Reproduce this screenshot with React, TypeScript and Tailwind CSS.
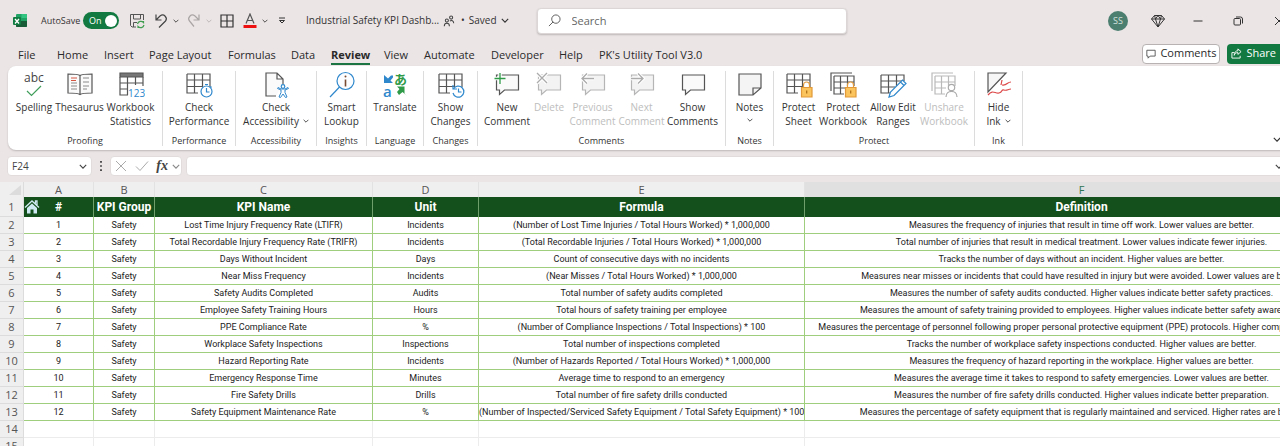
import React from "react";

const ui = "font-['Open_Sans','Noto_Sans_CJK_JP',sans-serif]";

function Chevron({ className = "" }: { className?: string }) {
  return (
    <svg viewBox="0 0 10 6" className={className} fill="none" stroke="currentColor" strokeWidth="1.4" aria-hidden="true">
      <path d="M1 1l4 4 4-4" />
    </svg>
  );
}

function Icon({ children, className = "" }: { children: React.ReactNode; className?: string }) {
  return (
    <svg viewBox="0 0 28 28" className={`mb-px h-7 w-7 ${className}`} fill="none" stroke="#555" strokeWidth="1.2" aria-hidden="true">
      {children}
    </svg>
  );
}

/* ---------- ribbon icons ---------- */

const SpellingIcon = () => (
  <span className="mb-px flex h-7 flex-col items-center">
    <span className="text-[12px] leading-[14px] text-[#444]">abc</span>
    <svg viewBox="0 0 16 12" className="h-3 w-4" fill="none" stroke="#3f9e5a" strokeWidth="1.2" aria-hidden="true">
      <path d="M1 6l4.500 4.500L15 1" />
    </svg>
  </span>
);

const ThesaurusIcon = () => (
  <Icon>
    <path d="M14 4.500C12 3 8 3 2 3v19c6 0 10 0 12 1.500C16 22 20 22 26 22V3c-6 0-10 0-12 1.500zM14 4.500v19" fill="#fafafa" />
    <path d="M5 12h6M5 15h6M5 18h6M17 7h6M17 11h6M17 15h6M17 18h4" stroke="#8a8a8a" />
    <path d="M5 7h6M5 9.500h5" stroke="#d4553f" />
  </Icon>
);

const StatisticsIcon = () => (
  <Icon>
    <path d="M3 2h23v4H3z" fill="#777" stroke="#555" />
    <path d="M3 6v18h8M26 6v9M3 12h23M3 18h8M10.500 6v18M18.500 6v8" />
    <text x="11" y="25.500" fontSize="10" fill="#2f88cc" stroke="none">123</text>
  </Icon>
);

const gridPath = "M2 3h23v13M2 3v19h11M2 9h23M2 15.500h16M9.500 3v19M17.500 3v13";

const PerformanceIcon = () => (
  <Icon>
    <path d={gridPath} />
    <circle cx="21.500" cy="20.500" r="5.500" fill="#fff" stroke="#2f88cc" />
    <path d="M21.500 17v4h3M20 13.500h3M25.500 15.500l1 1" stroke="#2f88cc" />
  </Icon>
);

const AccessibilityIcon = () => (
  <Icon>
    <path d="M14 25H4V2h11l6 6v5M15 2v6h6" fill="#fafafa" />
    <circle cx="21" cy="15.500" r="1.800" fill="#fff" stroke="#2f88cc" />
    <path d="M15.500 17.500l3.500 1.500v2.500L17 26l1.500 .500L21 23l2.500 3.500L25 26l-2-4.500V19l3.500-1.500-.500-1L23 18h-4l-3-1.500z" stroke="#2f88cc" fill="#fff" strokeWidth="1" />
  </Icon>
);

const LookupIcon = () => (
  <Icon>
    <circle cx="17.500" cy="10" r="8.500" stroke="#2f88cc" fill="#fbfdff" />
    <path d="M11.500 16L2 26" stroke="#2f88cc" />
    <path d="M17.500 8.500v7" stroke="#7a4a30" strokeWidth="1.600" />
    <circle cx="17.500" cy="5.500" r="1" fill="#7a4a30" stroke="none" />
  </Icon>
);

const TranslateIcon = () => (
  <Icon>
    <path d="M3 4v8h9L9.500 9.500 12 6.500V4.500H10L7 7.500z" fill="#2f88cc" stroke="none" />
    <path d="M26 25l-2.500-2.500V15.500H16l2.500 2.500-2.500 3 2 3 3.500-3z" fill="#2f9a48" stroke="none" />
    <text x="2" y="25.500" fontSize="15" fontWeight="600" fill="#2f88cc" stroke="none">a</text>
    <text x="13" y="13" fontSize="13" fontWeight="600" fill="#2f9a48" stroke="none">あ</text>
  </Icon>
);

const ChangesIcon = () => (
  <Icon>
    <path d={gridPath} />
    <path d="M16.500 18a5.500 5.500 0 1 1-.500 4" fill="#fff" stroke="#2f88cc" />
    <path d="M16 14v4h4" stroke="#2f88cc" />
    <path d="M21.500 17.500v3.500h3" stroke="#2f88cc" />
  </Icon>
);

function Bubble({ muted, mark }: { muted?: boolean; mark?: string }) {
  return (
    <Icon>
      <path d="M3.500 4h22v15h-14l-5 4.500V19h-3z" stroke={muted ? "#b5b5b5" : "#555"} fill={muted ? "#f3f3f3" : "#fafafa"} />
      {mark && <path d={mark} stroke="#fff" strokeWidth="3.500" />}
      {mark && <path d={mark} stroke={muted ? "#ababab" : "#2f9a48"} strokeWidth="1.300" />}
    </Icon>
  );
}

const NotesIcon = () => (
  <Icon>
    <path d="M3 3h22v14l-8 7H3zM17 24v-7h8" fill="#f4f4f4" />
  </Icon>
);

const Lock = () => (
  <>
    <path d="M18.500 17v-3a3 3 0 0 1 6 0v3" stroke="#e2993a" fill="#fff" />
    <path d="M16.500 16.500h10.500V26H16.500z" fill="#fbc45c" stroke="#e2993a" />
    <path d="M21.700 19.500v3" stroke="#a86a14" />
  </>
);

const ProtectSheetIcon = () => (
  <Icon>
    <path d={gridPath} />
    <Lock />
  </Icon>
);

const bookPath = "M2 20V2h21M5 5h20v10M5 5v18h10M5 11h20M5 17h11M11.500 5v18M18.500 5v10";

const ProtectWorkbookIcon = () => (
  <Icon>
    <path d={bookPath} />
    <Lock />
  </Icon>
);

const AllowEditIcon = () => (
  <Icon>
    <path d="M2 4h23v6M2 4v18h9M2 10h23M2 16h14M9.500 4v18M17.500 4v12" />
    <path d="M10 26l1.500-5L23.500 9l3.500 3.500-12 12zM21.500 11l3.500 3.500" fill="#fff" stroke="#2f88cc" />
  </Icon>
);

const UnshareIcon = () => (
  <Icon>
    <path d={bookPath} stroke="#b9b9b9" />
    <circle cx="21.500" cy="16.500" r="3.200" fill="#fff" stroke="#aaa" />
    <path d="M16 26c0-7.500 11-7.500 11 0" fill="#fff" stroke="#aaa" />
  </Icon>
);

const InkIcon = () => (
  <Icon>
    <path d="M3 2h18L3 21z" fill="#f6f6f6" />
    <path d="M3 24c5-6 7-1 11-2s2-4 5-3 4-1 7-1M26 11c-4 0-4 4-9 3M17 9l-1 5" stroke="#dd4747" />
  </Icon>
);

/* ---------- ribbon ---------- */

type Tool = { icon: React.ReactNode; lines: string[]; width: string; muted?: boolean; menu?: "inline" | "below" };
type Group = { label: string; width: string; tools: Tool[] };

const groups: Group[] = [
  {
    label: "Proofing",
    width: "w-[155px]",
    tools: [
      { icon: <SpellingIcon />, lines: ["Spelling"], width: "w-[41px]" },
      { icon: <ThesaurusIcon />, lines: ["Thesaurus"], width: "w-[50px]" },
      { icon: <StatisticsIcon />, lines: ["Workbook", "Statistics"], width: "w-[52px]" },
    ],
  },
  { label: "Performance", width: "w-[73px]", tools: [{ icon: <PerformanceIcon />, lines: ["Check", "Performance"], width: "w-[70px]" }] },
  {
    label: "Accessibility",
    width: "w-[81px]",
    tools: [{ icon: <AccessibilityIcon />, lines: ["Check", "Accessibility"], width: "w-[78px]", menu: "inline" }],
  },
  { label: "Insights", width: "w-[50px]", tools: [{ icon: <LookupIcon />, lines: ["Smart", "Lookup"], width: "w-[46px]" }] },
  { label: "Language", width: "w-[57px]", tools: [{ icon: <TranslateIcon />, lines: ["Translate"], width: "w-[50px]" }] },
  { label: "Changes", width: "w-[54px]", tools: [{ icon: <ChangesIcon />, lines: ["Show", "Changes"], width: "w-[50px]" }] },
  {
    label: "Comments",
    width: "w-[248px]",
    tools: [
      { icon: <Bubble mark="M7 2v11M1.500 7.500h11" />, lines: ["New", "Comment"], width: "w-[46px]" },
      { icon: <Bubble muted mark="M2 2l10 10M12 2L2 12" />, lines: ["Delete"], width: "w-[38px]", muted: true },
      { icon: <Bubble muted mark="M15 7.500H3M8 2.500l-5 5 5 5" />, lines: ["Previous", "Comment"], width: "w-[49px]", muted: true },
      { icon: <Bubble muted mark="M3 7.500h12M10 2.500l5 5-5 5" />, lines: ["Next", "Comment"], width: "w-[49px]", muted: true },
      { icon: <Bubble />, lines: ["Show", "Comments"], width: "w-[53px]" },
    ],
  },
  { label: "Notes", width: "w-[48px]", tools: [{ icon: <NotesIcon />, lines: ["Notes"], width: "w-[40px]", menu: "below" }] },
  {
    label: "Protect",
    width: "w-[201px]",
    tools: [
      { icon: <ProtectSheetIcon />, lines: ["Protect", "Sheet"], width: "w-[40px]" },
      { icon: <ProtectWorkbookIcon />, lines: ["Protect", "Workbook"], width: "w-[49px]" },
      { icon: <AllowEditIcon />, lines: ["Allow Edit", "Ranges"], width: "w-[51px]" },
      { icon: <UnshareIcon />, lines: ["Unshare", "Workbook"], width: "w-[51px]", muted: true },
    ],
  },
  { label: "Ink", width: "w-[48px]", tools: [{ icon: <InkIcon />, lines: ["Hide", "Ink"], width: "w-[40px]", menu: "inline" }] },
];

function ToolButton({ tool }: { tool: Tool }) {
  return (
    <button
      type="button"
      disabled={tool.muted}
      className={`flex shrink-0 flex-col items-center whitespace-nowrap text-[10px] leading-[14px] ${tool.width} ${tool.muted ? "text-[#bdbdbd]" : "text-[#333]"}`}
    >
      {tool.icon}
      {tool.lines.map((line, i) => (
        <span key={line} className="flex items-center gap-1">
          {line}
          {tool.menu === "inline" && i === tool.lines.length - 1 && <Chevron className="h-1 w-[6px]" />}
        </span>
      ))}
      {tool.menu === "below" && <Chevron className="mt-1 h-1 w-[6px]" />}
    </button>
  );
}

function Ribbon() {
  return (
    <section aria-label="Review" className="ml-2 -mr-2 flex items-stretch rounded-lg bg-white pt-[5px] pb-1 shadow-[0_1px_2px_rgba(0,0,0,0.2)]">
      {groups.map((g) => (
        <div key={g.label} className={`flex h-[75px] shrink-0 flex-col items-center justify-between border-r border-[#dcdcdc] ${g.width}`}>
          <div className="flex">
            {g.tools.map((t, i) => (
              <ToolButton key={i} tool={t} />
            ))}
          </div>
          <span className="text-[9px] leading-[10px] text-[#333]">{g.label}</span>
        </div>
      ))}
      <button type="button" aria-label="Collapse ribbon" className="mr-[7px] ml-auto self-end pb-1 text-[#333]">
        <Chevron className="h-[5px] w-2" />
      </button>
    </section>
  );
}

/* ---------- title bar and tabs ---------- */

function TitleBar() {
  return (
    <header className="flex h-[41px] items-center text-[10px] text-[#333]">
      <svg viewBox="0 0 16 16" className="ml-3 h-4 w-4 shrink-0" aria-hidden="true">
        <rect x="4" y="1" width="11" height="13" rx="1" fill="#21a366" />
        <path d="M9.500 1H14a1 1 0 0 1 1 1v3H9.500z" fill="#33c481" />
        <path d="M4 8h11v5a1 1 0 0 1-1 1H5a1 1 0 0 1-1-1z" fill="#185c37" />
        <rect x="1" y="4" width="8" height="8" rx="1" fill="#107c41" />
        <path d="M3 6l4 4.500M7 6l-4 4.500" stroke="#fff" strokeWidth="1.300" />
      </svg>
      <label className="ml-[13px] flex items-center">
        <span className="w-[42px] text-[9px]">AutoSave</span>
        <span className="flex h-[17px] w-9 items-center justify-between rounded-full bg-[#127a40] pr-[2px] pl-[6px] text-[9px] text-white">
          <input type="checkbox" role="switch" defaultChecked className="sr-only" />
          On
          <span className="h-3 w-3 rounded-full bg-white" />
        </span>
      </label>
      <button type="button" aria-label="Save" className="ml-[10px]">
        <svg viewBox="0 0 16 16" className="h-4 w-4" fill="none" stroke="#555" aria-hidden="true">
          <path d="M7 14H3l-1.500-1.500V1.500h13V7M4.500 1.500V6h7V1.500M4.500 14V9.500H8" />
          <path d="M8.500 11a3.500 3.500 0 0 1 6-1.500V8M15 12a3.500 3.500 0 0 1-6 1.500V15" stroke="#3f9e4f" strokeWidth="1.200" />
        </svg>
      </button>
      <button type="button" aria-label="Undo" className="ml-2 flex items-center gap-1">
        <svg viewBox="0 0 16 16" className="h-4 w-4" fill="none" stroke="#444" strokeWidth="1.200" aria-hidden="true">
          <path d="M3 1.500V7h5.500M3 7l4-4c4-3 8 2 5.500 5L6 14.500" />
        </svg>
        <Chevron className="h-1 w-[6px]" />
      </button>
      <button type="button" aria-label="Redo" disabled className="ml-[7px] flex items-center gap-1 text-[#b5b0b0]">
        <svg viewBox="0 0 16 16" className="h-4 w-4" fill="none" stroke="#aaa5a5" strokeWidth="1.200" aria-hidden="true">
          <path d="M13 1.500V7H7.500M13 7L9 3C5 0 1 5 3.500 8L8 13.500" />
        </svg>
        <Chevron className="h-1 w-[6px]" />
      </button>
      <button type="button" aria-label="Borders" className="ml-2">
        <svg viewBox="0 0 14 14" className="h-[14px] w-[14px]" fill="none" stroke="#333" strokeWidth="1.200" aria-hidden="true">
          <path d="M1 1h12v12H1zM7 1v12M1 7h12" />
        </svg>
      </button>
      <button type="button" aria-label="Font colour" className="ml-2 flex items-center gap-1">
        <svg viewBox="0 0 16 16" className="h-4 w-4" aria-hidden="true">
          <path d="M4 10.500L8 1l4 9.500M5.500 7.500h5" fill="none" stroke="#555" strokeWidth="1.200" />
          <path d="M1.500 12h13v3h-13z" fill="#ee1111" />
        </svg>
        <Chevron className="h-1 w-[6px]" />
      </button>
      <button type="button" aria-label="Customize toolbar" className="ml-[10px]">
        <svg viewBox="0 0 8 8" className="h-2 w-2" fill="none" stroke="#333" aria-hidden="true">
          <path d="M1 1h6M1.500 3.500L4 6l2.500-2.500z" />
        </svg>
      </button>
      <span className="ml-5 w-[137px] whitespace-nowrap">Industrial Safety KPI Dashb...</span>
      <svg viewBox="0 0 14 14" className="h-3 w-3 shrink-0" fill="none" stroke="#444" strokeWidth="1.200" aria-hidden="true">
        <circle cx="4.500" cy="6.500" r="1.800" />
        <path d="M1.500 13c0-4.500 6-4.500 6 0" />
        <circle cx="9.500" cy="3" r="1.800" />
        <path d="M8 7c2-1.500 4.500 0 4.500 2.500" />
      </svg>
      <button type="button" className="ml-[6px] flex items-center gap-1 whitespace-nowrap">
        <span>•</span>
        <span>Saved</span>
        <Chevron className="h-[5px] w-2" />
      </button>
      <div className="ml-7 flex h-[26px] w-[310px] items-center rounded border border-[#dcd6d6] bg-white pl-[10px] shadow-[0_1px_2px_rgba(0,0,0,0.2)]">
        <svg viewBox="0 0 14 14" className="h-[13px] w-[13px]" fill="none" stroke="#555" aria-hidden="true">
          <circle cx="8.500" cy="5.500" r="4.500" />
          <path d="M5.500 8.500L1 13" />
        </svg>
        <input
          type="search"
          aria-label="Search"
          placeholder="Search"
          className="ml-[11px] h-5 min-w-0 flex-1 text-[11px] outline-none placeholder:text-[#666]"
        />
      </div>
      <div className="-mr-1 ml-auto flex shrink-0 items-center">
        <button type="button" aria-label="Account" className="h-5 w-5 rounded-full bg-[#4d7f71] text-[9px] text-[#d5e2de]">
          SS
        </button>
        <button type="button" aria-label="Premium" className="ml-[23px]">
          <svg viewBox="0 0 14 14" className="h-[14px] w-[14px]" fill="none" stroke="#333" aria-hidden="true">
            <path d="M3.500 1.500h7L13.500 5 7 13 .500 5zM.500 5h13M3.500 1.500l1 3.500L7 13l2.500-8 1-3.500M4.500 5L7 1.500 9.500 5" />
          </svg>
        </button>
        <button type="button" aria-label="Minimize" className="ml-7">
          <svg viewBox="0 0 10 10" className="h-[10px] w-[10px]" stroke="#333" aria-hidden="true">
            <path d="M.500 5h9" />
          </svg>
        </button>
        <button type="button" aria-label="Restore" className="ml-[30px]">
          <svg viewBox="0 0 10 10" className="h-[10px] w-[10px]" fill="none" stroke="#333" aria-hidden="true">
            <rect x="1" y="2.500" width="6.500" height="6.500" rx="1" />
            <path d="M3 1h4.500a2 2 0 0 1 2 2v4.500" />
          </svg>
        </button>
        <button type="button" aria-label="Close" className="ml-[31px]">
          <svg viewBox="0 0 10 10" className="h-[10px] w-[10px]" stroke="#333" aria-hidden="true">
            <path d="M1 1l8 8M9 1L1 9" />
          </svg>
        </button>
      </div>
    </header>
  );
}

const tabs: { name: string; width: string }[] = [
  { name: "File", width: "w-[39px]" },
  { name: "Home", width: "w-[47px]" },
  { name: "Insert", width: "w-[45px]" },
  { name: "Page Layout", width: "w-[79px]" },
  { name: "Formulas", width: "w-[63px]" },
  { name: "Data", width: "w-[40px]" },
  { name: "Review", width: "w-[53px]" },
  { name: "View", width: "w-[40px]" },
  { name: "Automate", width: "w-[67px]" },
  { name: "Developer", width: "w-[68px]" },
  { name: "Help", width: "w-[40px]" },
  { name: "PK's Utility Tool V3.0", width: "w-[120px]" },
];

function TabRow() {
  return (
    <nav className="flex h-[25px] items-center pl-[18px] text-[11px] text-[#2a2a2a]">
      {tabs.map((t) => (
        <div key={t.name} className={`flex shrink-0 ${t.width}`}>
          <button
            type="button"
            className={`whitespace-nowrap border-b-2 pt-1 leading-[17px] ${t.name === "Review" ? "border-[#1c7443] font-bold" : "border-transparent"}`}
          >
            {t.name}
          </button>
        </div>
      ))}
      <button type="button" className="ml-auto flex h-5 shrink-0 items-center gap-1 rounded border border-[#b8b2b2] bg-white px-[3px]">
        <svg viewBox="0 0 12 12" className="h-[10px] w-[10px]" fill="none" stroke="#444" aria-hidden="true">
          <path d="M1 1.500h10v7H5l-2.500 2.500V8.500H1z" />
        </svg>
        Comments
      </button>
      <button type="button" className="ml-[7px] -mr-[14px] flex h-5 shrink-0 items-center gap-1 rounded bg-[#127a40] px-1 text-white">
        <svg viewBox="0 0 12 12" className="h-[11px] w-[11px]" fill="none" stroke="#fff" aria-hidden="true">
          <path d="M3.500 5H1v6h9V8.500M7.500 1L11 4 7.500 7V5C5 5 4 6.500 3.500 8c0-3 1.500-5 4-5z" />
        </svg>
        Share
        <Chevron className="ml-1 h-1 w-[6px]" />
      </button>
    </nav>
  );
}

function FormulaBar() {
  return (
    <div className="flex h-8 items-center pl-[7px] text-[#444]">
      <div className="flex h-5 w-[85px] shrink-0 items-center rounded border border-[#e2dcdc] bg-white pr-1 pl-1">
        <input aria-label="Name box" defaultValue="F24" className="h-4 w-full min-w-0 text-[10px] outline-none" />
        <Chevron className="h-[5px] w-2 shrink-0" />
      </div>
      <svg viewBox="0 0 2 12" className="mr-2 ml-2 h-[10px] w-[2px] shrink-0" fill="#333" aria-hidden="true">
        <path d="M0 0h2v2H0zM0 5h2v2H0zM0 10h2v2H0z" />
      </svg>
      <div className="flex h-5 w-[72px] shrink-0 items-center justify-between rounded border border-[#e2dcdc] bg-white pr-px pl-1">
        <button type="button" aria-label="Cancel">
          <svg viewBox="0 0 12 12" className="h-3 w-3" fill="none" stroke="#aaa" aria-hidden="true">
            <path d="M1 1l10 10M11 1L1 11" />
          </svg>
        </button>
        <button type="button" aria-label="Enter">
          <svg viewBox="0 0 14 12" className="h-3 w-[14px]" fill="none" stroke="#aaa" aria-hidden="true">
            <path d="M1 6.500l4 4L13 1.500" />
          </svg>
        </button>
        <button type="button" className="flex items-center gap-1 font-['Liberation_Serif',serif] text-[14px] leading-none font-bold italic">
          fx
          <Chevron className="h-[5px] w-2 text-[#888]" />
        </button>
      </div>
      <div className="-mr-2 ml-1 flex h-5 min-w-0 flex-1 items-center rounded border border-[#e2dcdc] bg-white pr-1">
        <input aria-label="Formula" className="h-4 min-w-0 flex-1 text-[10px] outline-none" />
        <Chevron className="h-[5px] w-2" />
      </div>
    </div>
  );
}

/* ---------- sheet ---------- */

const heads = ["#", "KPI Group", "KPI Name", "Unit", "Formula", "Definition"];

const rows: string[][] = [
  ["Lost Time Injury Frequency Rate (LTIFR)", "Incidents", "(Number of Lost Time Injuries / Total Hours Worked) * 1,000,000", "Measures the frequency of injuries that result in time off work. Lower values are better."],
  ["Total Recordable Injury Frequency Rate (TRIFR)", "Incidents", "(Total Recordable Injuries / Total Hours Worked) * 1,000,000", "Total number of injuries that result in medical treatment. Lower values indicate fewer injuries."],
  ["Days Without Incident", "Days", "Count of consecutive days with no incidents", "Tracks the number of days without an incident. Higher values are better."],
  ["Near Miss Frequency", "Incidents", "(Near Misses / Total Hours Worked) * 1,000,000", "Measures near misses or incidents that could have resulted in injury but were avoided. Lower values are better."],
  ["Safety Audits Completed", "Audits", "Total number of safety audits completed", "Measures the number of safety audits conducted. Higher values indicate better safety practices."],
  ["Employee Safety Training Hours", "Hours", "Total hours of safety training per employee", "Measures the amount of safety training provided to employees. Higher values indicate better safety awareness."],
  ["PPE Compliance Rate", "%", "(Number of Compliance Inspections / Total Inspections) * 100", "Measures the percentage of personnel following proper personal protective equipment (PPE) protocols. Higher compliance is better."],
  ["Workplace Safety Inspections", "Inspections", "Total number of inspections completed", "Tracks the number of workplace safety inspections conducted. Higher values are better."],
  ["Hazard Reporting Rate", "Incidents", "(Number of Hazards Reported / Total Hours Worked) * 1,000,000", "Measures the frequency of hazard reporting in the workplace. Higher values are better."],
  ["Emergency Response Time", "Minutes", "Average time to respond to an emergency", "Measures the average time it takes to respond to safety emergencies. Lower values are better."],
  ["Fire Safety Drills", "Drills", "Total number of fire safety drills conducted", "Measures the number of fire safety drills conducted. Higher values indicate better preparation."],
  ["Safety Equipment Maintenance Rate", "%", "(Number of Inspected/Serviced Safety Equipment / Total Safety Equipment) * 100", "Measures the percentage of safety equipment that is regularly maintained and serviced. Higher rates are better."],
];

const rowHead = `border-r border-b border-[#dcdcdc] bg-[#f0efef] p-0 text-[11px] font-normal text-[#555] ${ui}`;

function Sheet() {
  return (
    <main className="overflow-hidden bg-white">
      <table className="w-[1359px] table-fixed border-separate border-spacing-0 text-center font-[Roboto,sans-serif] text-[9px] text-[#222]">
        <colgroup>
          <col className="w-6" />
          <col className="w-[70px]" />
          <col className="w-[61px]" />
          <col className="w-[218px]" />
          <col className="w-[106px]" />
          <col className="w-[326px]" />
          <col />
        </colgroup>
        <thead>
          <tr className={`h-[15px] bg-[#f0efef] text-[11px] leading-[15px] text-[#555] ${ui}`}>
            <td className="border-r border-[#dcdcdc] p-0">
              <svg viewBox="0 0 12 10" className="ml-[9px] h-[10px] w-3" aria-hidden="true">
                <path d="M12 0v10H0z" fill="#dcdcdc" />
              </svg>
            </td>
            {["A", "B", "C", "D", "E", "F"].map((c) => (
              <th
                key={c}
                scope="col"
                className={`border-r border-[#e2e2e2] p-0 font-normal ${c === "F" ? "bg-[#e0e0e0] text-[#2c7350]" : ""}`}
              >
                {c}
              </th>
            ))}
          </tr>
        </thead>
        <tbody>
          <tr className="h-5">
            <th scope="row" className={`${rowHead} leading-[19px]`}>1</th>
            {heads.map((h, i) => (
              <th key={h} scope="col" className="relative border-r border-[#6f9f6a] bg-[#13501b] p-0 text-[12px] leading-[20px] font-bold text-white">
                {i === 0 && (
                  <svg viewBox="0 0 16 16" className="absolute top-[2px] left-0 h-4 w-4" fill="none" stroke="#cfeaf2" strokeWidth="1.300" aria-hidden="true">
                    <path d="M1 8.500L8 2l7 6.500M11.500 4.500V2H13v4" />
                    <path d="M3 9l5-4.500L13 9v5.500H9.500v-4h-3v4H3z" fill="#cfeaf2" stroke="none" />
                  </svg>
                )}
                {h}
              </th>
            ))}
          </tr>
          {rows.map((r, i) => (
            <tr key={r[0]} className="h-[17px]">
              <th scope="row" className={`${rowHead} leading-[16px]`}>{i + 2}</th>
              {[String(i + 1), "Safety", ...r].map((v, j) => (
                <td key={j} className="overflow-hidden border-r border-b border-[#9fce7c] p-0 leading-[16px] whitespace-nowrap">
                  {v}
                </td>
              ))}
            </tr>
          ))}
          {[14, 15].map((n) => (
            <tr key={n} className="h-[17px]">
              <th scope="row" className={`${rowHead} leading-[16px]`}>{n}</th>
              {heads.map((h) => (
                <td key={h} className="border-r border-b border-[#ececec] p-0" />
              ))}
            </tr>
          ))}
        </tbody>
      </table>
    </main>
  );
}

export default function App() {
  return (
    <div className={`h-screen overflow-hidden bg-[#ece5e6] ${ui}`}>
      <TitleBar />
      <TabRow />
      <Ribbon />
      <FormulaBar />
      <Sheet />
    </div>
  );
}
